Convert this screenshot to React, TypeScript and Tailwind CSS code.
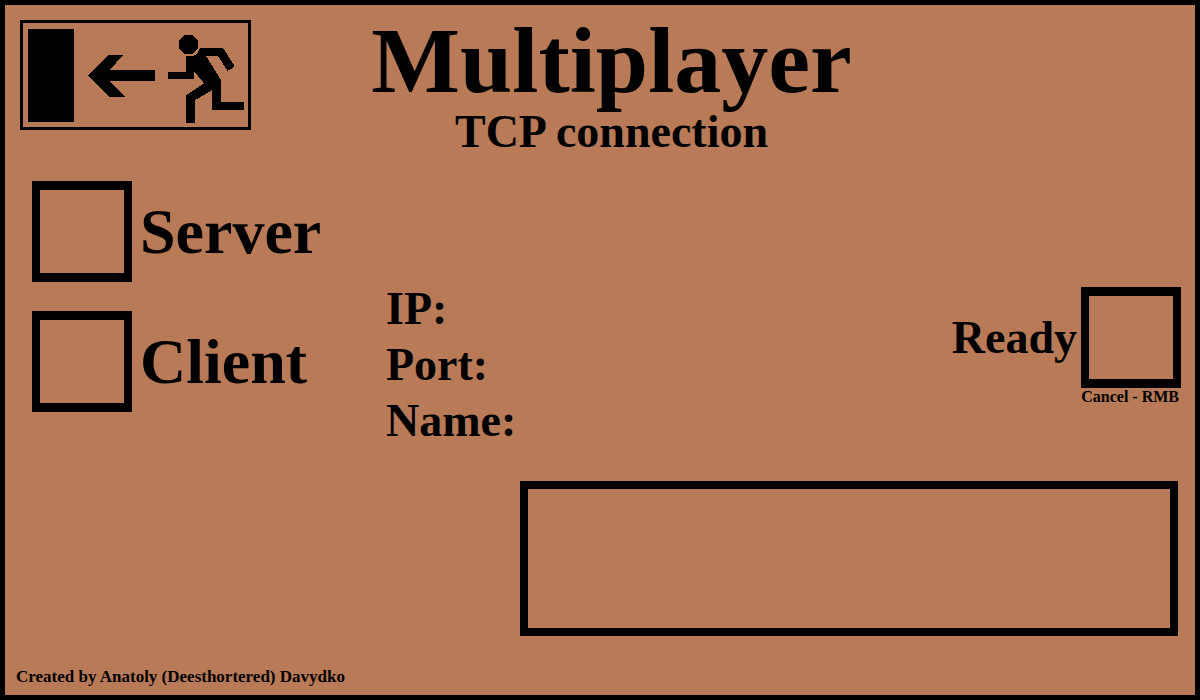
import { useState } from "react";

const boxClass =
  "block h-[101px] w-[100px] shrink-0 cursor-pointer appearance-none border-x-8 border-y-[9px] border-black bg-transparent checked:bg-black";

function ExitIcon() {
  return (
    <svg
      viewBox="69 69 675 312"
      className="block h-[104px] w-[225px] fill-black"
      shapeRendering="crispEdges"
      aria-hidden="true"
    >
      <rect x="84" y="87" width="138" height="279" />
      <path d="M264 227 325 165H370L329 210H465V243H329L376 291H328Z" />
      <path d="M554 105H577L594 122V146L577 162H554L537 146V122Z" />
      <path d="M600 144H669L702 195V201L683 213L654 168H618L663 240V306H732V330H636V270L585 301V369H558V286L612 250L582 213V237H504V216H558V168H579L591 161Z" />
    </svg>
  );
}

function RoleOption({
  label,
  checked,
  onSelect,
}: {
  label: string;
  checked: boolean;
  onSelect: () => void;
}) {
  return (
    <label className="flex cursor-pointer items-center gap-2 text-[64px] leading-[64px]">
      <input
        type="radio"
        name="role"
        className={boxClass}
        checked={checked}
        onChange={onSelect}
      />
      <span>{label}</span>
    </label>
  );
}

function Field({ id, label }: { id: string; label: string }) {
  return (
    <div className="flex h-14 items-center gap-3 text-[46px] leading-[56px]">
      <label htmlFor={id}>{label}</label>
      <input
        id={id}
        type="text"
        className="h-14 w-full min-w-0 flex-1 bg-transparent outline-none"
      />
    </div>
  );
}

export default function App() {
  const [role, setRole] = useState("");
  const [ready, setReady] = useState(false);

  return (
    <div className="flex min-h-screen flex-col border-[5px] border-black bg-[#b97a57] font-['Liberation_Serif',serif] font-bold text-black">
      <header className="grid grid-cols-[1fr_auto_1fr] pt-[15px] pl-[15px]">
        <div>
          <button
            type="button"
            aria-label="Exit"
            className="block cursor-pointer border-[3px] border-black"
          >
            <ExitIcon />
          </button>
        </div>
        <div className="pl-2 text-center">
          <h1 className="text-[94px] leading-[80px]">Multiplayer</h1>
          <p className="text-[46px] leading-[64px]">TCP connection</p>
        </div>
      </header>

      <main>
        <div className="flex">
          <div className="flex w-[381px] flex-col gap-[29px] pt-[17px] pl-[27px]">
            <RoleOption
              label="Server"
              checked={role === "server"}
              onSelect={() => setRole("server")}
            />
            <RoleOption
              label="Client"
              checked={role === "client"}
              onSelect={() => setRole("client")}
            />
          </div>

          <form className="min-w-0 flex-1 pt-[117px]">
            <Field id="ip" label="IP:" />
            <Field id="port" label="Port:" />
            <Field id="name" label="Name:" />
          </form>

          <div className="pt-[123px] pr-[14px]">
            <label className="flex cursor-pointer items-center justify-end gap-1 text-[46px] leading-[56px]">
              <span>Ready</span>
              <input
                type="checkbox"
                className={boxClass}
                checked={ready}
                onChange={() => setReady(true)}
                onContextMenu={(event) => {
                  event.preventDefault();
                  setReady(false);
                }}
              />
            </label>
            <p className="pr-0.5 text-right text-base leading-[18px]">
              Cancel - RMB
            </p>
          </div>
        </div>

        <div
          role="log"
          aria-label="Connection messages"
          className="mt-8 mr-[17px] ml-auto h-[155px] w-[658px] max-w-full border-8 border-black"
        />
      </main>

      <footer className="mt-auto pb-[6px] pl-[11px] text-[17px] leading-6">
        Created by Anatoly (Deesthortered) Davydko
      </footer>
    </div>
  );
}
